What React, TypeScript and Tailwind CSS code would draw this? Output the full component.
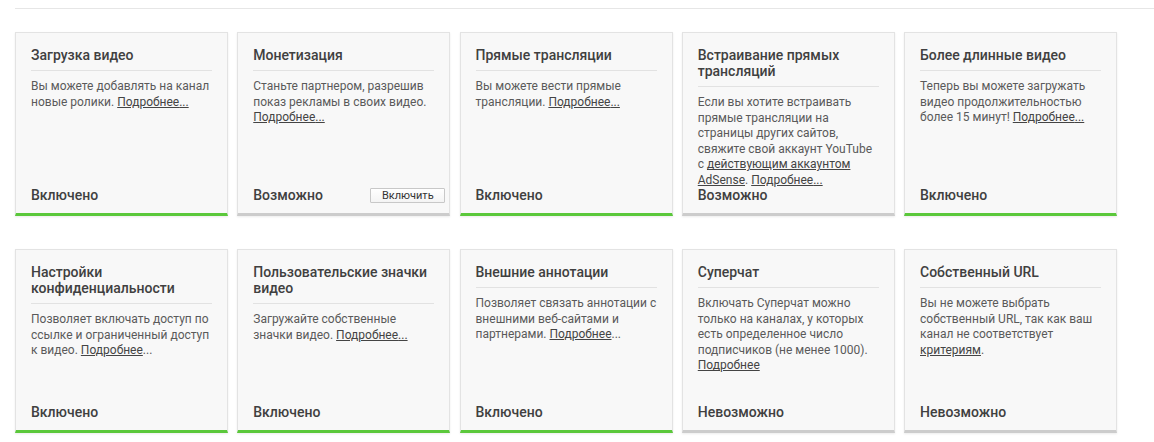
import React from "react";

type Status = "on" | "possible" | "off";

interface Feature {
  title: string;
  body: React.ReactNode;
  status: Status;
  action?: string;
}

// "Подробнее" link; some cards underline the dots too, some don't
const More = ({ dots = true, underlineDots = true }: { dots?: boolean; underlineDots?: boolean }) =>
  underlineDots ? (
    <a className="underline text-[#444]">Подробнее{dots ? "..." : ""}</a>
  ) : (
    <span>
      <a className="underline text-[#444]">Подробнее</a>
      {dots ? "..." : ""}
    </span>
  );

const features: Feature[] = [
  {
    title: "Загрузка видео",
    body: (
      <>
        Вы можете добавлять на канал новые ролики. <More />
      </>
    ),
    status: "on",
  },
  {
    title: "Монетизация",
    body: (
      <>
        Станьте партнером, разрешив показ рекламы в своих видео. <More />
      </>
    ),
    status: "possible",
    action: "Включить",
  },
  {
    title: "Прямые трансляции",
    body: (
      <>
        Вы можете вести прямые трансляции. <More />
      </>
    ),
    status: "on",
  },
  {
    title: "Встраивание прямых трансляций",
    body: (
      <>
        Если вы хотите встраивать прямые трансляции на страницы других сайтов, свяжите свой аккаунт YouTube с{" "}
        <a className="underline text-[#444]">действующим аккаунтом AdSense</a>. <More />
      </>
    ),
    status: "possible",
  },
  {
    title: "Более длинные видео",
    body: (
      <>
        Теперь вы можете загружать видео продолжительностью более 15 минут! <More />
      </>
    ),
    status: "on",
  },
  {
    title: "Настройки конфиденциальности",
    body: (
      <>
        Позволяет включать доступ по ссылке и ограниченный доступ к видео. <More underlineDots={false} />
      </>
    ),
    status: "on",
  },
  {
    title: "Пользовательские значки видео",
    body: (
      <>
        Загружайте собственные значки видео. <More />
      </>
    ),
    status: "on",
  },
  {
    title: "Внешние аннотации",
    body: (
      <>
        Позволяет связать аннотации с внешними веб-сайтами и партнерами. <More underlineDots={false} />
      </>
    ),
    status: "on",
  },
  {
    title: "Суперчат",
    body: (
      <>
        Включать Суперчат можно только на каналах, у которых есть определенное число подписчиков (не менее 1000).{" "}
        <More dots={false} />
      </>
    ),
    status: "off",
  },
  {
    title: "Собственный URL",
    body: (
      <>
        Вы не можете выбрать собственный URL, так как ваш канал не соответствует{" "}
        <a className="underline text-[#444]">критериям</a>.
      </>
    ),
    status: "off",
  },
];

const statusLabel: Record<Status, string> = {
  on: "Включено",
  possible: "Возможно",
  off: "Невозможно",
};

function FeatureCard({ f }: { f: Feature }) {
  return (
    <div
      className={`flex flex-col h-[184px] bg-[#f8f8f8] border border-[#e3e3e3] border-b-[3px] shadow-[0_1px_2px_rgba(0,0,0,0.08)] ${
        f.status === "on" ? "border-b-[#5bc83b]" : "border-b-[#cccccc]"
      }`}
    >
      <div className="px-[15px] pt-[14px]">
        <h3 className="text-[14px] leading-[16px] font-medium text-[#404040] pb-[7px] border-b border-[#e2e2e2]">
          {f.title}
        </h3>
      </div>
      {/* body may run under the footer, as in the original */}
      <div className="flex-1 min-h-0 px-[15px] pt-[8px] text-[12px] leading-[15.6px] text-[#5a5a5a]">
        <p>{f.body}</p>
      </div>
      <div className="flex items-center justify-between pl-[15px] pr-[4px] pb-[10px]">
        <span className="text-[14px] leading-[16px] font-medium text-[#404040]">{statusLabel[f.status]}</span>
        {f.action && (
          <button className="h-[15px] w-[75px] border border-[#c8c8c8] bg-gradient-to-b from-white to-[#f4f4f4] text-[11px] leading-[13px] text-[#333] rounded-[1px]">
            {f.action}
          </button>
        )}
      </div>
    </div>
  );
}

export default function App() {
  return (
    <div
      className="bg-white min-h-[442px] pl-[15px] pt-[8px]"
      style={{ fontFamily: "Roboto, 'Noto Sans', Arial, sans-serif" }}
    >
      <div className="border-t border-[#e6e6e6] pt-[23px]">
        <div className="grid grid-cols-[repeat(5,213px)] gap-x-[9.25px] gap-y-[33px]">
          {features.map((f) => (
            <FeatureCard key={f.title} f={f} />
          ))}
        </div>
      </div>
    </div>
  );
}
